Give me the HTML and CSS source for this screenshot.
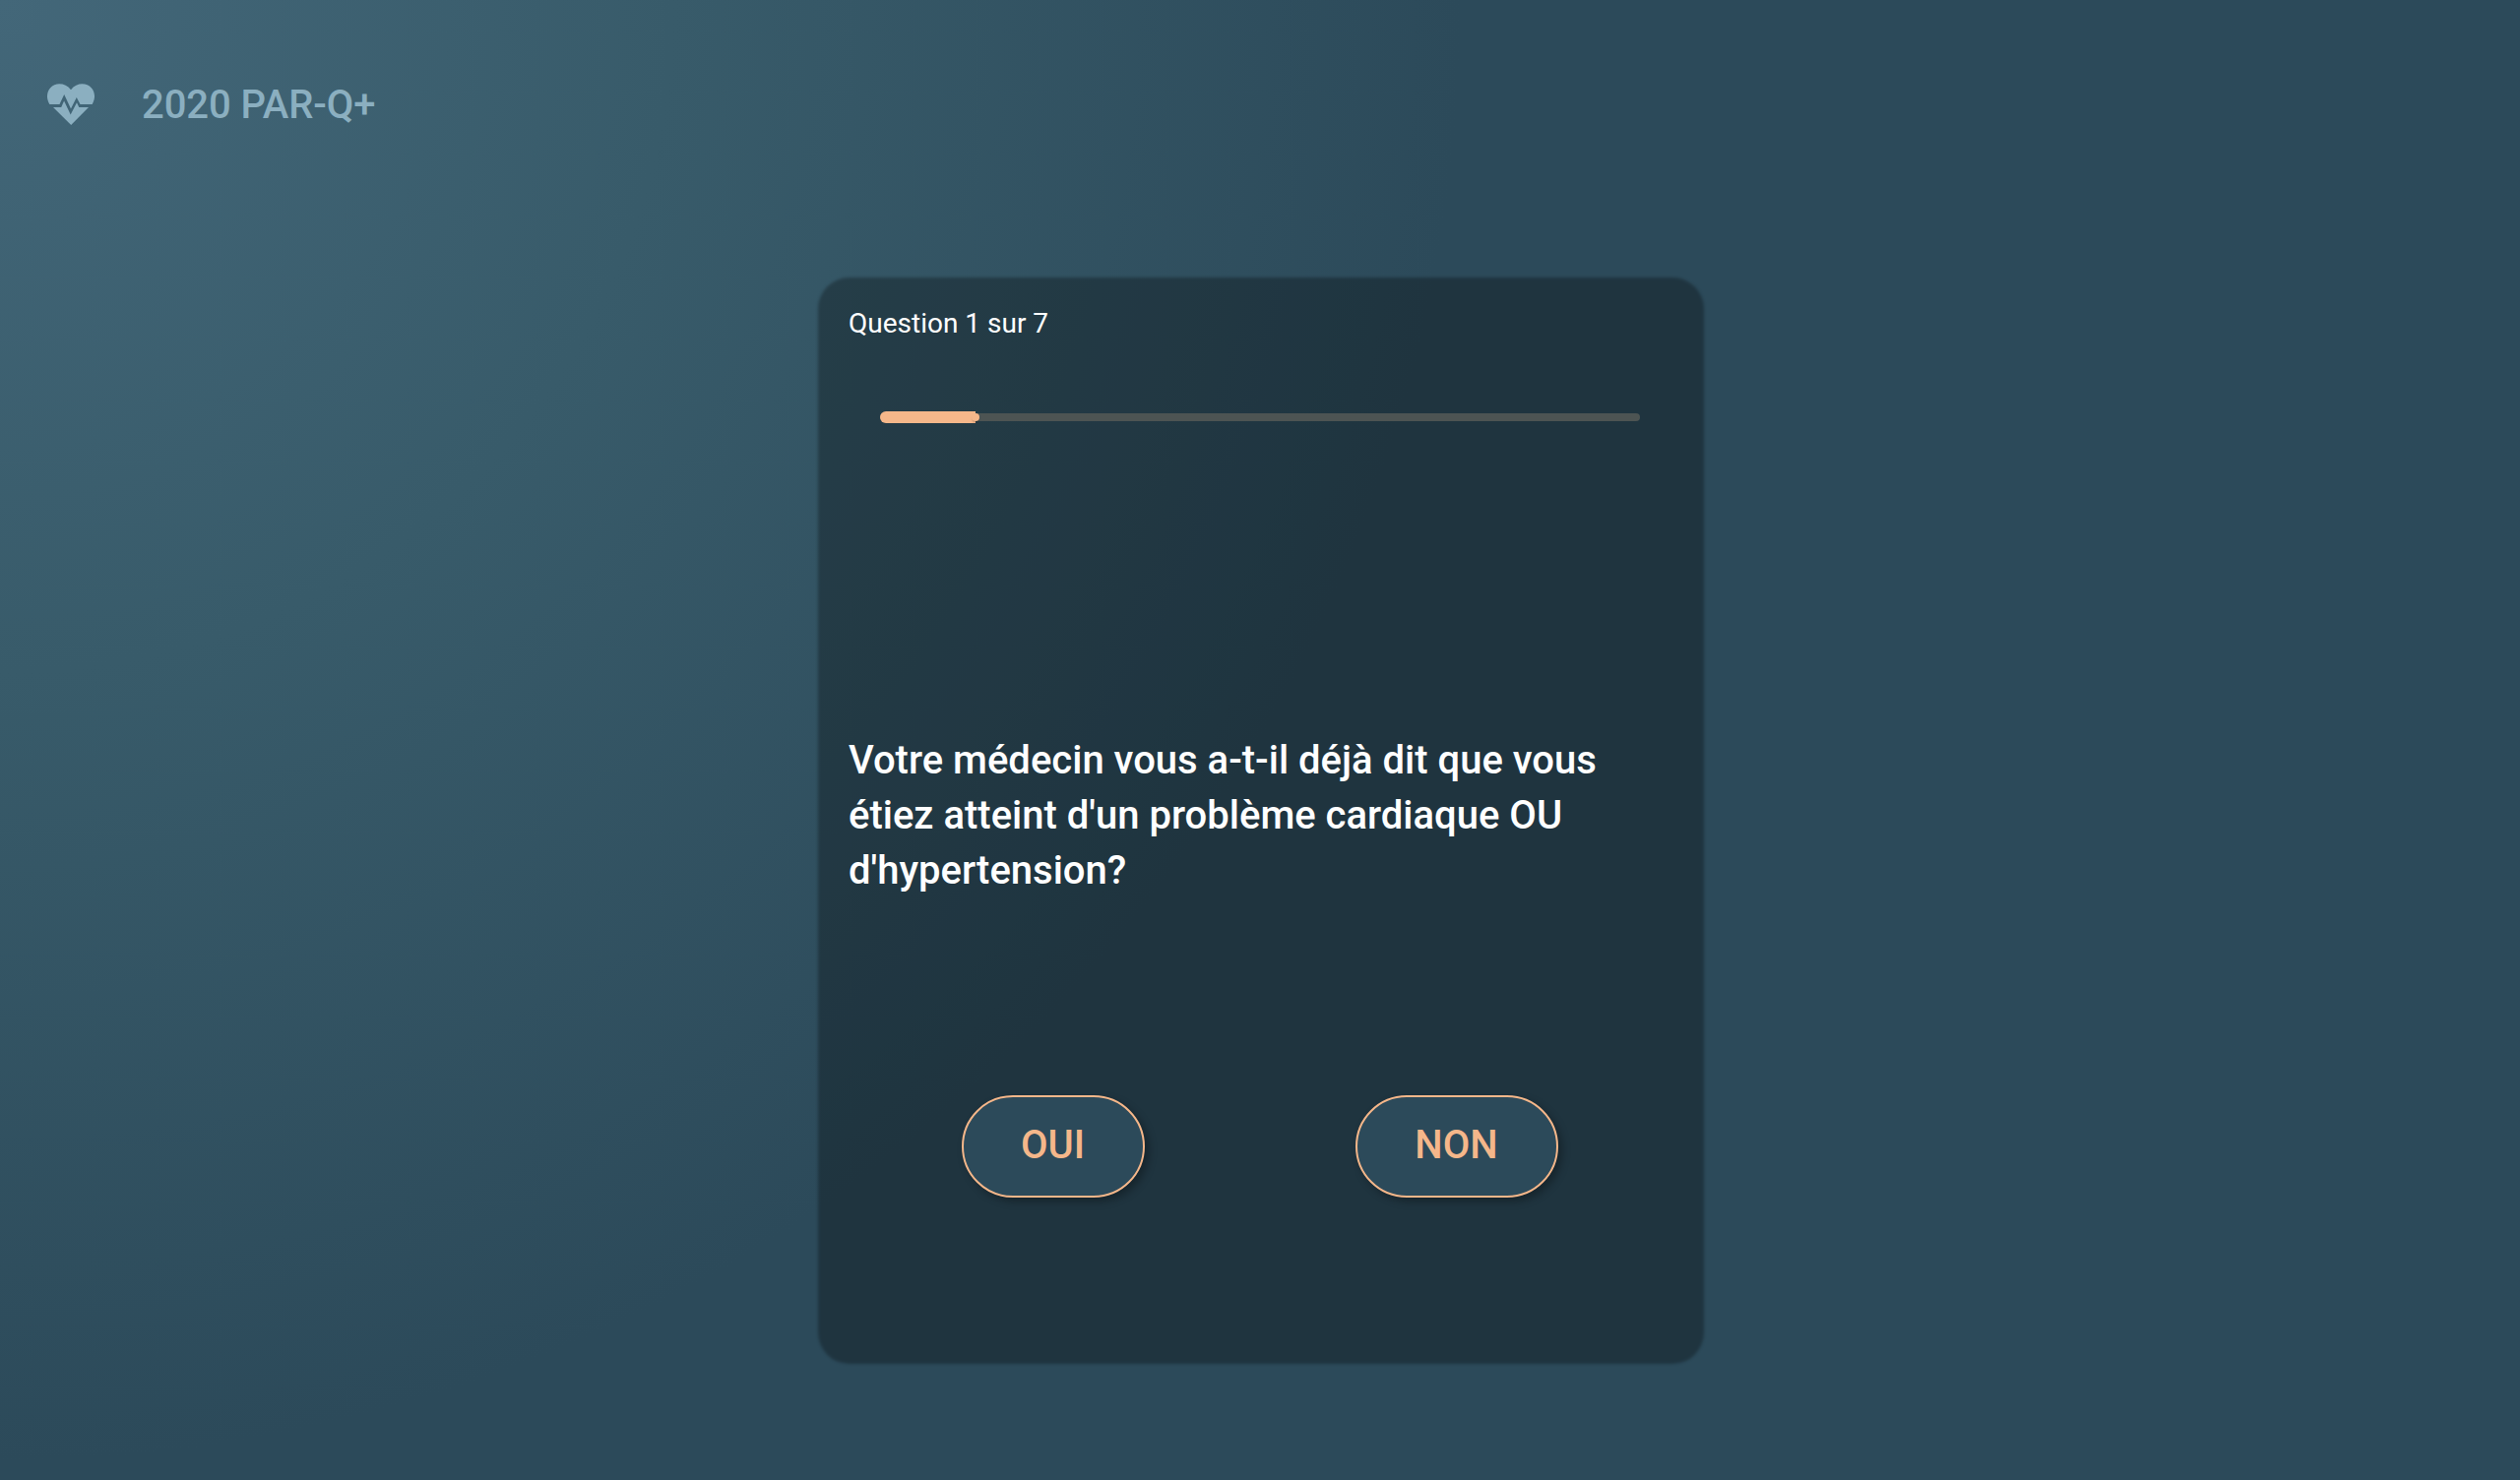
FILE: index.html
```
<!DOCTYPE html>
<html lang="fr">
<head>
<meta charset="utf-8">
<title>2020 PAR-Q+</title>
<link rel="stylesheet" href="styles.css">
</head>
<body>
<header class="header">
  <svg class="logo" viewBox="0 0 48 42" aria-hidden="true">
    <path d="M24 6.200C29.500 -1.400 40 -1.500 44.800 4.200C49.100 9.200 48.800 16 45.600 21H33.500L29.800 14L24 25.500L17.200 11L12.500 21H2.400C-.8 16 -1.100 9.200 3.200 4.200C8 -1.500 18.500 -1.400 24 6.200Z"/>
    <path d="M6 24H14.200L17.100 17.500L23.700 31.500L30 19.200L32.300 24H42L24.200 42Z"/>
  </svg>
  <h1 class="title">2020 PAR-Q+</h1>
</header>
<main class="card">
  <p class="count">Question 1 sur 7</p>
  <div class="progress"><div class="bar" style="width:97px"></div><div class="thumb"></div></div>
  <div class="content"><h2 class="question">Votre médecin vous a-t-il déjà dit que vous étiez atteint d'un problème cardiaque OU d'hypertension?</h2></div>
  <div class="actions">
    <button class="button yes">OUI</button>
    <button class="button no">NON</button>
  </div>
</main>
</body>
</html>
```
FILE: styles.css
```
* { box-sizing: border-box; }
body {
  margin: 0;
  height: 1504px;
  overflow: hidden;
  font-family: Roboto, sans-serif;
  color: #fff;
  background: radial-gradient(circle at 0 0, #436779 0%, #385b6a 23%, #2c4a5a 50%);
}
h1, h2, p { margin: 0; }
.header {
  display: flex;
  align-items: center;
  gap: 48px;
  height: 212px;
  padding: 0 48px;
}
.logo { width: 48px; height: 42px; fill: #8bafc0; }
.title { padding-top: 2px; font-size: 40px; font-weight: 500; line-height: 64px; letter-spacing: -.1px; color: #8bafc0; }
.card {
  position: relative;
  z-index: 0;
  display: flex;
  flex-direction: column;
  width: 900px;
  height: 1104px;
  margin: 70px auto 0;
  padding: 27px 32px 0;
}
/* soft-edged translucent panel behind the card content */
.card::before {
  content: "";
  position: absolute;
  z-index: -1;
  inset: 0 -1px 0 1px;
  border-radius: 32px;
  background: rgba(0, 0, 0, .29);
  filter: blur(1.5px);
}
.count { font-size: 28px; line-height: 40px; }
.progress {
  display: flex;
  align-items: center;
  height: 8px;
  margin: 71px 32px 0;
  border-radius: 4px;
  background: #4d5453;
}
.bar {
  height: 12px;
  background: #f5b78a;
  border-radius: 6px 0 0 6px;
}
.thumb {
  width: 8px;
  height: 8px;
  margin-left: -4px;
  border-radius: 50%;
  background: #f5b78a;
  box-shadow: 0 2px 2px -1px rgba(0, 0, 0, .3);
}
.content { height: 168px; margin-top: 317px; }
.question { font-size: 40px; font-weight: 500; line-height: 56px; }
.actions {
  display: flex;
  justify-content: center;
  gap: 214px;
  margin-top: 200px;
}
.button {
  height: 104px;
  padding: 0 1px 4px 0;
  border: 2px solid #f5b78a;
  border-radius: 52px;
  background: #2c4a5a;
  color: #f5b78a;
  font: 500 40px Roboto, sans-serif;
  box-shadow: 4px 4px 8px rgba(0, 0, 0, .3);
}
.yes { width: 186px; }
.no { width: 206px; }
```
